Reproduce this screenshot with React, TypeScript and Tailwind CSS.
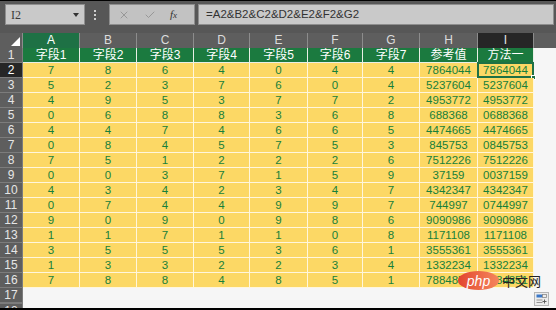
import { Check, X } from "lucide-react";

const colWidths = [57, 57, 57, 56, 58, 55, 57, 58, 56];
const letters = ["A", "B", "C", "D", "E", "F", "G", "H", "I"];
const headers = ["字段1", "字段2", "字段3", "字段4", "字段5", "字段6", "字段7", "参考值", "方法一"];

const rows = [
  ["7", "8", "6", "4", "0", "4", "4", "7864044", "7864044"],
  ["5", "2", "3", "7", "6", "0", "4", "5237604", "5237604"],
  ["4", "9", "5", "3", "7", "7", "2", "4953772", "4953772"],
  ["0", "6", "8", "8", "3", "6", "8", "688368", "0688368"],
  ["4", "4", "7", "4", "6", "6", "5", "4474665", "4474665"],
  ["0", "8", "4", "5", "7", "5", "3", "845753", "0845753"],
  ["7", "5", "1", "2", "2", "2", "6", "7512226", "7512226"],
  ["0", "0", "3", "7", "1", "5", "9", "37159", "0037159"],
  ["4", "3", "4", "2", "3", "4", "7", "4342347", "4342347"],
  ["0", "7", "4", "4", "9", "9", "7", "744997", "0744997"],
  ["9", "0", "9", "0", "9", "8", "6", "9090986", "9090986"],
  ["1", "1", "7", "1", "1", "0", "8", "1171108", "1171108"],
  ["3", "5", "5", "5", "3", "6", "1", "3555361", "3555361"],
  ["1", "3", "3", "2", "2", "3", "4", "1332234", "1332234"],
  ["7", "8", "8", "4", "8", "5", "1", "7884851", "7884851"],
];

const font = { fontFamily: '"Liberation Sans", "Noto Sans CJK SC", sans-serif' };

export default function App() {
  return (
    <div
      className="relative flex h-[310px] w-[556px] flex-col overflow-hidden border-t border-b-2 border-black bg-[#575757]"
      style={font}
    >
      <FormulaBar />

      {/* column letters */}
      <div className="flex h-[15px] bg-[#5e5e5e] text-[12px] leading-[15px] text-[#dcdcdc]">
        <div className="relative w-[23px] shrink-0 border-r border-[#8c8c8c]">
          <span className="absolute bottom-[2px] right-[2px] h-0 w-0 border-b-[9px] border-l-[9px] border-b-white border-l-transparent" />
        </div>
        {letters.map((l, i) => (
          <div
            key={l}
            className={
              "shrink-0 border-r border-[#8c8c8c] text-center " +
              (i === 0 ? "bg-[#1e7145] text-white" : i === 8 ? "bg-[#262626] text-[#e8e8e8]" : "")
            }
            style={{ width: colWidths[i] }}
          >
            {l}
          </div>
        ))}
        <div className="flex-1" />
      </div>

      {/* row 1 */}
      <div className="flex h-[15px] text-[12px] leading-[14px]">
        <RowHead n={1} />
        {headers.map((h, i) => (
          <div
            key={h}
            className="shrink-0 border-r border-b border-[#e9efe6] bg-[#1b7a3f] text-center text-white"
            style={{ width: colWidths[i] }}
          >
            {h}
          </div>
        ))}
        <div className="flex-1 bg-[#f6f6f6]" />
      </div>

      {rows.map((r, ri) => (
        <div key={ri} className="flex h-[15px] text-[11.5px] leading-[14px]">
          <RowHead n={ri + 2} active={ri === 0} />
          {r.map((v, ci) => (
            <div
              key={ci}
              className="relative shrink-0 border-r border-b border-[#fff6dc] bg-[#fcd865] text-center text-[#17803a]"
              style={{ width: colWidths[ci] }}
            >
              {v}
              {ri === 0 && ci === 8 && (
                <>
                  <span className="absolute -top-px -left-px -right-px -bottom-px border-2 border-[#1e7145]" />
                  <span className="absolute -right-[3px] -bottom-[3px] h-[5px] w-[5px] border border-white bg-[#1e7145]" />
                </>
              )}
            </div>
          ))}
          <div className="flex-1 bg-[#f6f6f6]" />
        </div>
      ))}

      <div className="flex h-[15px] text-[12px] leading-[15px]">
        <RowHead n={17} />
        <div className="flex-1 bg-[#f6f6f6]" />
      </div>
      <div className="flex flex-1 text-[12px] leading-[15px]">
        <div className="w-[23px] shrink-0 overflow-hidden border-r border-t border-[#7c7c7c] bg-[#5e5e5e] text-center text-[#e6e6e6]">
          18
        </div>
        <div className="flex-1 bg-[#f6f6f6]" />
      </div>

      {/* watermark */}
      <div className="absolute left-[458px] top-[270px] flex items-center gap-[3px]">
        <span className="flex h-[19px] w-[41px] items-center justify-center rounded-[50%] bg-gradient-to-r from-[#e2452f] to-[#f4855c] text-[14px] italic leading-none text-white">
          php
        </span>
        <span className="text-[13px] leading-none text-[#222]" style={{ fontFamily: '"Noto Sans CJK SC", sans-serif' }}>
          中文网
        </span>
      </div>

      {/* quick analysis */}
      <div className="absolute left-[534px] top-[291px] flex h-[14px] w-[15px] items-center justify-center border border-[#b5b5b5] bg-[#ececec]">
        <svg width="11" height="10" viewBox="0 0 11 10">
          <rect x="0.5" y="0.5" width="6" height="3" fill="#3b78c8" />
          <rect x="6.5" y="0.5" width="4" height="3" fill="none" stroke="#8a8a8a" strokeWidth="0.8" />
          <path d="M0.5 6h6M0.5 8.5h6" stroke="#8a8a8a" strokeWidth="0.9" />
          <path d="M8.5 5.5v4M6.5 7.5h4" stroke="#555" strokeWidth="0.9" />
        </svg>
      </div>
    </div>
  );
}

function RowHead({ n, active = false }: { n: number; active?: boolean }) {
  return (
    <div
      className={
        "w-[23px] shrink-0 border-r border-b border-[#7c7c7c] text-center text-[12px] leading-[14px] " +
        (active ? "bg-[#262626] text-white" : "bg-[#5e5e5e] text-[#e6e6e6]")
      }
    >
      {n}
    </div>
  );
}

function FormulaBar() {
  return (
    <div className="flex h-[32px] shrink-0 items-start gap-0 bg-[#575757] pt-[3px]">
      <div className="ml-[5px] flex h-[21px] w-[80px] items-center justify-between border border-[#8e8e8e] bg-[#c9c9c9] pl-[5px] pr-[5px]">
        <span className="text-[12px] text-[#3a3a3a]" style={{ fontFamily: '"Liberation Serif", serif' }}>
          I2
        </span>
        <span className="h-0 w-0 border-x-[3.5px] border-t-[4px] border-x-transparent border-t-[#333]" />
      </div>
      <div className="ml-[8px] flex h-[21px] w-[4px] flex-col items-center justify-center gap-[2px]">
        <span className="h-[2px] w-[2px] bg-[#cfcfcf]" />
        <span className="h-[2px] w-[2px] bg-[#cfcfcf]" />
        <span className="h-[2px] w-[2px] bg-[#cfcfcf]" />
      </div>
      <div className="ml-[12px] flex h-[21px] w-[86px] items-center border border-[#8e8e8e] bg-[#c2c2c2]">
        <X className="ml-[8px] h-[12px] w-[12px] text-[#8d8d8d]" strokeWidth={1.6} />
        <Check className="ml-[14px] h-[12px] w-[12px] text-[#8d8d8d]" strokeWidth={1.6} />
        <span className="ml-[14px] text-[11px] italic text-[#333]" style={{ fontFamily: '"Liberation Serif", serif' }}>
          f<span className="text-[9px]">x</span>
        </span>
      </div>
      <div className="ml-[3px] flex h-[21px] flex-1 items-center border border-[#8e8e8e] bg-[#c9c9c9] pl-[7px] mr-[2px]">
        <span className="text-[11.5px] text-[#333]">=A2&amp;B2&amp;C2&amp;D2&amp;E2&amp;F2&amp;G2</span>
      </div>
    </div>
  );
}
